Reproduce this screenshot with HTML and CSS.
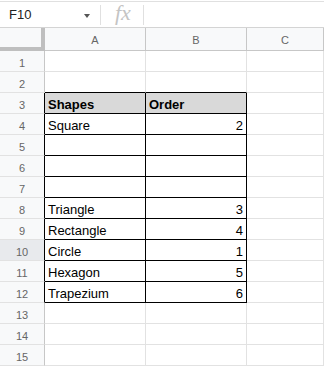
FILE: index.html
```html
<!DOCTYPE html>
<html lang="en">
<head>
  <meta charset="UTF-8">
  <title>Shapes sheet</title>
  <link rel="stylesheet" href="styles.css">
</head>
<body>
  <div class="formula-bar">
    <div class="name-box">F10</div>
    <div class="caret"></div>
    <div class="sep"></div>
    <div class="fx">fx</div>
    <div class="sep"></div>
  </div>

  <table class="sheet">
    <colgroup>
      <col class="c-head">
      <col class="c-a">
      <col class="c-b">
      <col class="c-c">
    </colgroup>
    <thead>
      <tr>
        <th class="corner"></th>
        <th>A</th>
        <th>B</th>
        <th>C</th>
      </tr>
    </thead>
    <tbody>
      <tr><th>1</th><td></td><td></td><td></td></tr>
      <tr><th>2</th><td class="above"></td><td class="above"></td><td></td></tr>
      <tr><th class="edge">3</th><td class="box title">Shapes</td><td class="box title">Order</td><td></td></tr>
      <tr><th class="edge">4</th><td class="box">Square</td><td class="box num">2</td><td></td></tr>
      <tr><th class="edge">5</th><td class="box"></td><td class="box"></td><td></td></tr>
      <tr><th class="edge">6</th><td class="box"></td><td class="box"></td><td></td></tr>
      <tr><th class="edge">7</th><td class="box"></td><td class="box"></td><td></td></tr>
      <tr><th class="edge">8</th><td class="box">Triangle</td><td class="box num">3</td><td></td></tr>
      <tr><th class="edge">9</th><td class="box">Rectangle</td><td class="box num">4</td><td></td></tr>
      <tr><th class="edge active">10</th><td class="box">Circle</td><td class="box num">1</td><td></td></tr>
      <tr><th class="edge">11</th><td class="box">Hexagon</td><td class="box num">5</td><td></td></tr>
      <tr><th class="edge">12</th><td class="box">Trapezium</td><td class="box num">6</td><td></td></tr>
      <tr><th>13</th><td></td><td></td><td></td></tr>
      <tr><th>14</th><td></td><td></td><td></td></tr>
      <tr><th>15</th><td></td><td></td><td></td></tr>
    </tbody>
  </table>
</body>
</html>
```

FILE: styles.css
```css
* {
  box-sizing: border-box;
}
body {
  margin: 0;
  background: #fff;
  font-family: "Liberation Sans", Arial, sans-serif;
  overflow: hidden;
}

/* formula bar */
.formula-bar {
  display: flex;
  align-items: center;
  height: 27px;
  margin-top: 1px;
  border-top: 1px solid #e0e0e0;
  border-bottom: 1px solid #d4d4d4;
}
.name-box {
  width: 84px;
  padding-left: 9px;
  font-size: 13px;
  color: #222;
}
.caret {
  width: 0;
  height: 0;
  border-left: 3.5px solid transparent;
  border-right: 3.5px solid transparent;
  border-top: 4px solid #555;
  margin-top: 2px;
}
.sep {
  width: 1px;
  height: 20px;
  background: #e0e0e0;
  margin-left: 10px;
}
.fx {
  width: 33px;
  padding-left: 14px;
  font-family: "Liberation Serif", serif;
  font-style: italic;
  font-size: 22px;
  color: #c4c4c4;
  margin-top: -3px;
}
.fx + .sep {
  margin-left: 9px;
}

/* grid */
.sheet {
  border-collapse: separate;
  border-spacing: 0;
  table-layout: fixed;
  width: 324px;
}
.c-head { width: 45px; }
.c-a { width: 101px; }
.c-b { width: 101px; }
.c-c { width: 77px; }

.sheet th {
  background: #f8f9fa;
  color: #666;
  font-size: 11px;
  font-weight: normal;
  text-align: center;
  border-right: 1px solid #c7c7c7;
  border-bottom: 1px solid #c7c7c7;
  padding: 3px 0 0;
}
.sheet thead th {
  height: 23px;
  padding-top: 2px;
}
.sheet th.corner {
  border-right: 4px solid #bfbfbf;
  border-bottom: 4px solid #bfbfbf;
}
.sheet tbody th {
  height: 21px;
  border-bottom-color: #e2e2e2;
}
.sheet tbody th.edge {
  border-right-color: #000;
}
.sheet tbody th.active {
  background: #e8eaed;
}

.sheet td {
  height: 21px;
  padding: 3px 3px 0;
  font-size: 13px;
  color: #000;
  border-right: 1px solid #e2e2e2;
  border-bottom: 1px solid #e2e2e2;
  white-space: nowrap;
  overflow: hidden;
}
.sheet td.above {
  border-bottom-color: #000;
}
.sheet td.box {
  border-right-color: #000;
  border-bottom-color: #000;
}
.sheet td.title {
  background: #d9d9d9;
  font-weight: bold;
}
.sheet td.num {
  text-align: right;
}
```
